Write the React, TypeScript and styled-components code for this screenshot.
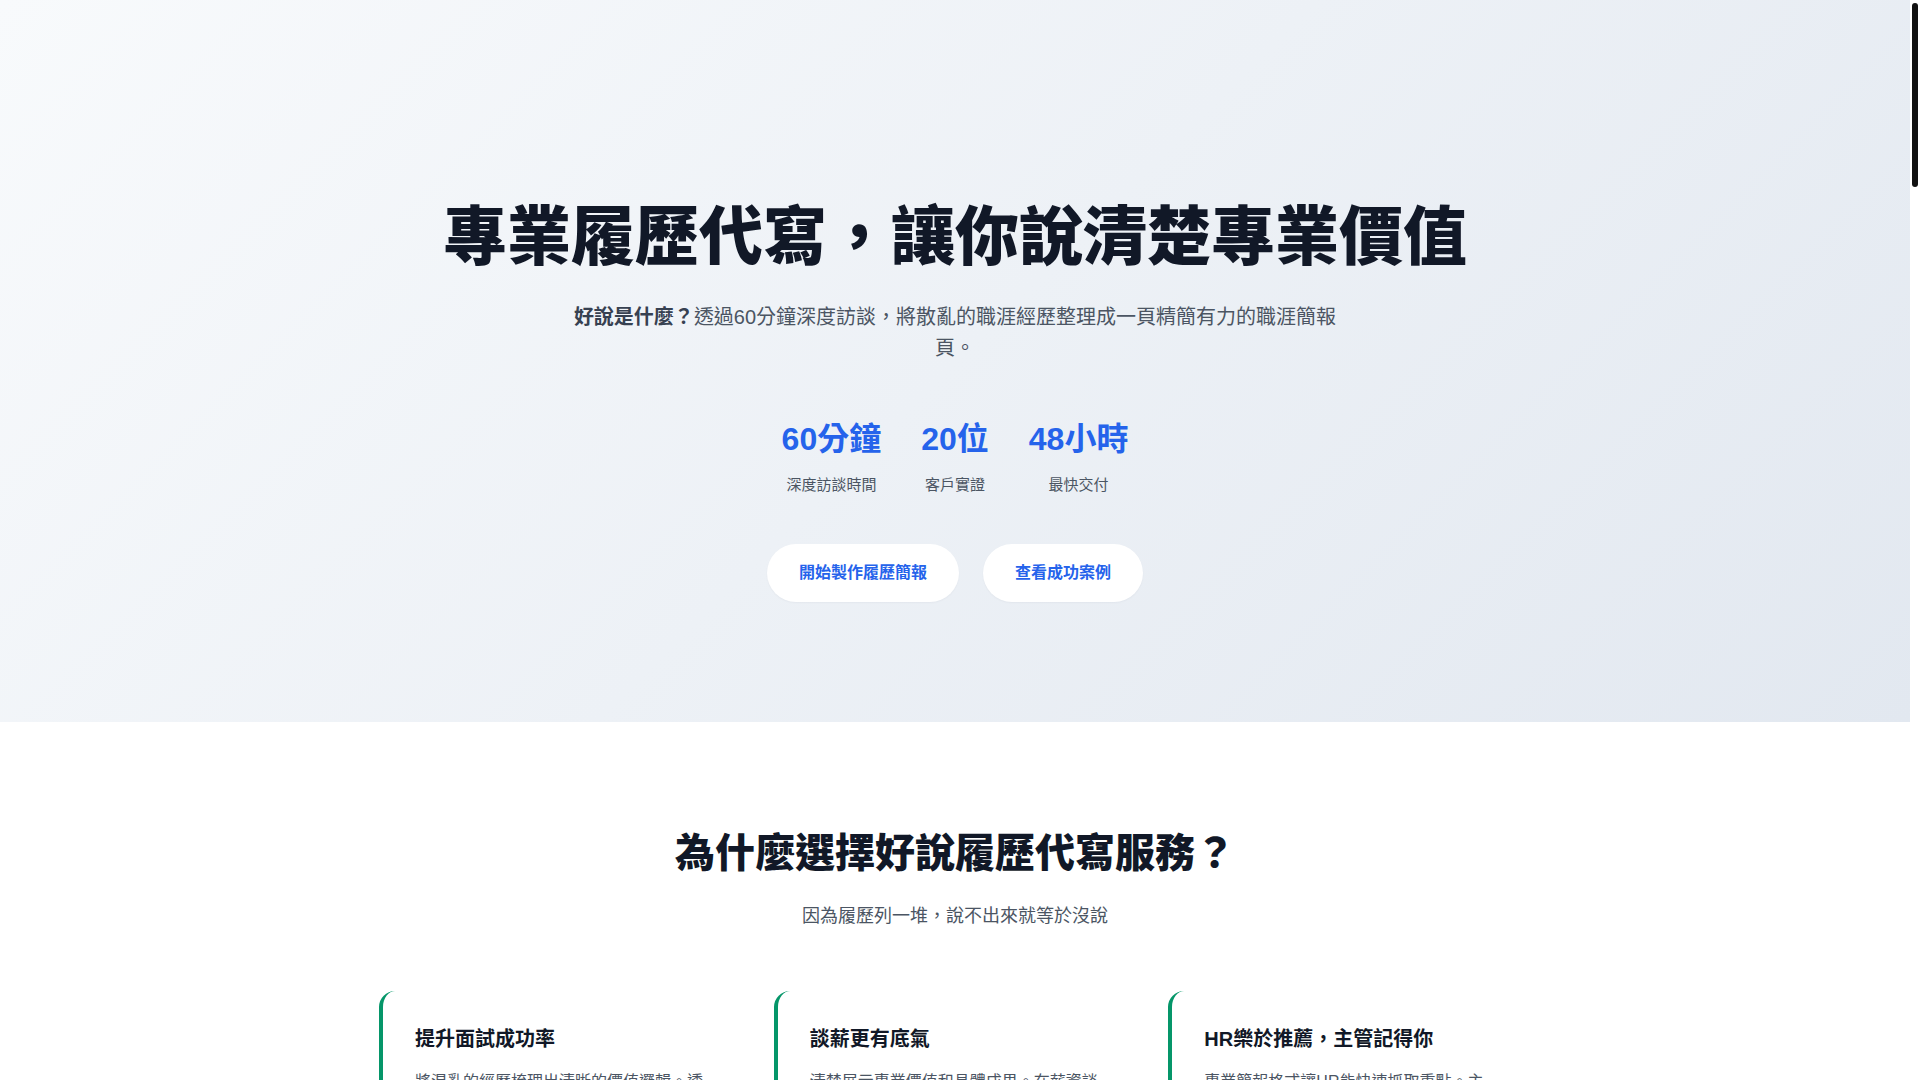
import React from "react";
import styled, { createGlobalStyle } from "styled-components";

const GlobalStyle = createGlobalStyle`
  html, body { margin: 0; padding: 0; }
  body {
    font-family: "Liberation Sans", "Noto Sans CJK TC", "Noto Sans", sans-serif;
    background: #ffffff;
    color: #111827;
    -webkit-font-smoothing: antialiased;
  }
  * { box-sizing: border-box; }
  ::-webkit-scrollbar { width: 0; height: 0; }
`;

const Page = styled.div`
  padding-right: 10px;
  background: #ffffff;
`;

/* drawing of the browser scrollbar seen in the screenshot, overlaying the right edge */
const ScrollRail = styled.div`
  position: fixed;
  top: 0;
  right: 0;
  width: 10px;
  height: 100vh;
  background: #ffffff;
  padding: 3px 2px;
  z-index: 10;
`;

const ScrollThumb = styled.div`
  width: 6px;
  height: 184px;
  border-radius: 3px;
  background: #111111;
`;

const Hero = styled.section`
  background: linear-gradient(135deg, #f8fafc 0%, #e2e8f0 100%);
  padding: 199px 24px 120px;
  text-align: center;
`;

const HeroTitle = styled.h1`
  margin: 0 0 26px;
  font-size: 64px;
  line-height: 1.2;
  font-weight: 900;
  color: #111827;
  letter-spacing: 0;
`;

const HeroLead = styled.p`
  max-width: 768px;
  margin: 0 auto;
  font-size: 20px;
  line-height: 1.55;
  color: #4b5563;

  strong {
    color: #374151;
    font-weight: 700;
  }
`;

const StatRow = styled.div`
  display: flex;
  justify-content: center;
  gap: 40px;
  margin-top: 55px;
`;

const Stat = styled.div`
  display: flex;
  flex-direction: column;
  align-items: center;
`;

const StatValue = styled.div`
  font-size: 32px;
  line-height: 1.25;
  font-weight: 700;
  color: #2563eb;
`;

const StatLabel = styled.div`
  margin-top: 15px;
  font-size: 15px;
  line-height: 1.5;
  color: #4b5563;
`;

const ButtonRow = styled.div`
  display: flex;
  justify-content: center;
  gap: 24px;
  margin-top: 48px;
`;

const PillButton = styled.button`
  padding: 16px 32px;
  border: none;
  border-radius: 9999px;
  background: #ffffff;
  color: #2563eb;
  font-family: inherit;
  font-size: 16px;
  line-height: 1.6;
  font-weight: 700;
  cursor: pointer;
  box-shadow: 0 1px 2px rgba(15, 23, 42, 0.04);
`;

const Section = styled.section<{ $bg?: string }>`
  background: ${(p) => p.$bg || "#ffffff"};
  padding: 107px 24px 96px;
  text-align: center;
`;

const SectionTitle = styled.h2`
  margin: 0 0 25px;
  font-size: 40px;
  line-height: 1.2;
  font-weight: 900;
  color: #111827;
`;

const SectionLead = styled.p`
  margin: 0;
  font-size: 18px;
  line-height: 1.6;
  color: #4b5563;
`;

const CardGrid = styled.div<{ $cols?: number }>`
  max-width: 1152px;
  margin: 60px auto 0;
  display: grid;
  grid-template-columns: repeat(${(p) => p.$cols || 3}, 1fr);
  gap: 32px;
  text-align: left;
`;

const Card = styled.div`
  background: #ffffff;
  border-left: 4px solid #059669;
  border-radius: 16px;
  padding: 34px 32px 32px;
`;

const CardTitle = styled.h3`
  margin: 0 0 15px;
  font-size: 20px;
  line-height: 1.4;
  font-weight: 700;
  color: #111827;
`;

const CardText = styled.p`
  margin: 0;
  font-size: 16px;
  line-height: 1.7;
  color: #4b5563;
`;

const StepCard = styled.div`
  background: #ffffff;
  border-radius: 16px;
  padding: 40px 32px;
  box-shadow: 0 4px 16px rgba(15, 23, 42, 0.06);
`;

const StepNumber = styled.div`
  width: 48px;
  height: 48px;
  border-radius: 50%;
  background: #2563eb;
  color: #ffffff;
  font-size: 20px;
  font-weight: 700;
  display: flex;
  align-items: center;
  justify-content: center;
  margin-bottom: 20px;
`;

const PriceCard = styled.div`
  background: #ffffff;
  border: 1px solid #e5e7eb;
  border-radius: 20px;
  padding: 48px 36px;
  min-height: 560px;
`;

const PriceValue = styled.div`
  margin: 16px 0 24px;
  font-size: 44px;
  font-weight: 800;
  color: #2563eb;
`;

const FeatureList = styled.ul`
  margin: 0;
  padding: 0 0 0 20px;
  font-size: 16px;
  line-height: 2.2;
  color: #4b5563;
`;

const Quote = styled.blockquote`
  margin: 0;
  background: #ffffff;
  border-radius: 16px;
  padding: 36px 32px;
  min-height: 320px;
  font-size: 16px;
  line-height: 1.8;
  color: #374151;
  box-shadow: 0 4px 16px rgba(15, 23, 42, 0.06);
`;

const QuoteAuthor = styled.div`
  margin-top: 20px;
  font-weight: 700;
  color: #111827;
`;

const FaqList = styled.div`
  max-width: 800px;
  margin: 62px auto 0;
  display: flex;
  flex-direction: column;
  gap: 16px;
  text-align: left;
`;

const FaqItem = styled.div`
  border: 1px solid #e5e7eb;
  border-radius: 12px;
  padding: 28px 32px;
`;

const FaqQ = styled.div`
  font-size: 18px;
  font-weight: 700;
  color: #111827;
  margin-bottom: 10px;
`;

const CtaBand = styled.section`
  background: linear-gradient(135deg, #f8fafc 0%, #e2e8f0 100%);
  padding: 120px 24px;
  text-align: center;
`;

const Footer = styled.footer`
  background: #0f172a;
  color: #94a3b8;
  padding: 80px 24px;
  text-align: center;
  font-size: 14px;
  line-height: 1.8;
`;

const reasons = [
  {
    title: "提升面試成功率",
    text: "將混亂的經歷梳理出清晰的價值邏輯。透過深度訪談挖掘你的核心優勢，讓面試官一眼看見你的專業與潛力。",
  },
  {
    title: "談薪更有底氣",
    text: "清楚展示專業價值和具體成果。在薪資談判時有憑有據，自信爭取你應得的待遇與職位。",
  },
  {
    title: "HR樂於推薦，主管記得你",
    text: "專業簡報格式讓HR能快速抓取重點。主管也更容易記住你的亮點與貢獻，增加被推薦的機會。",
  },
];

const steps = [
  { title: "預約諮詢", text: "填寫基本資料，選擇適合的訪談時段。" },
  { title: "深度訪談", text: "60分鐘一對一訪談，挖掘你的職涯亮點。" },
  { title: "撰寫簡報", text: "專業顧問整理成一頁精簡有力的職涯簡報。" },
  { title: "交付修改", text: "最快48小時交付，並提供修改服務。" },
];

const plans = [
  { name: "基礎方案", price: "NT$ 3,600", items: ["60分鐘深度訪談", "一頁職涯簡報", "一次修改"] },
  { name: "進階方案", price: "NT$ 5,800", items: ["60分鐘深度訪談", "一頁職涯簡報", "中英文版本", "兩次修改"] },
  { name: "完整方案", price: "NT$ 8,800", items: ["90分鐘深度訪談", "職涯簡報與履歷", "中英文版本", "面試模擬"] },
];

const quotes = [
  { text: "原本不知道怎麼介紹自己，訪談後整份簡報讓我在面試時更有自信。", who: "產品經理 / 王小姐" },
  { text: "簡報一頁就把我的經歷講清楚，主管面試時直接拿著簡報問問題。", who: "軟體工程師 / 陳先生" },
  { text: "談薪時有具體成果可以說，最後拿到比預期更好的條件。", who: "行銷專員 / 林小姐" },
];

const faqs = [
  { q: "訪談是線上還是實體？", a: "訪談以線上視訊進行，時間彈性，全台各地皆可預約。" },
  { q: "交付時間需要多久？", a: "訪談結束後最快48小時內交付初稿。" },
  { q: "可以修改嗎？", a: "依方案提供修改次數，確保簡報符合你的期待。" },
  { q: "適合哪些人？", a: "正在轉職、求職或準備升遷的專業工作者。" },
  { q: "如何付款？", a: "支援信用卡與銀行轉帳。" },
];

export default function App() {
  return (
    <Page>
      <GlobalStyle />
      <ScrollRail aria-hidden="true">
        <ScrollThumb />
      </ScrollRail>
      <Hero>
        <HeroTitle>專業履歷代寫，讓你說清楚專業價值</HeroTitle>
        <HeroLead>
          <strong>好說是什麼？</strong>透過60分鐘深度訪談，將散亂的職涯經歷整理成一頁精簡有力的職涯簡報頁。
        </HeroLead>
        <StatRow>
          <Stat>
            <StatValue>60分鐘</StatValue>
            <StatLabel>深度訪談時間</StatLabel>
          </Stat>
          <Stat>
            <StatValue>20位</StatValue>
            <StatLabel>客戶實證</StatLabel>
          </Stat>
          <Stat>
            <StatValue>48小時</StatValue>
            <StatLabel>最快交付</StatLabel>
          </Stat>
        </StatRow>
        <ButtonRow>
          <PillButton>開始製作履歷簡報</PillButton>
          <PillButton>查看成功案例</PillButton>
        </ButtonRow>
      </Hero>

      <Section>
        <SectionTitle>為什麼選擇好說履歷代寫服務？</SectionTitle>
        <SectionLead>因為履歷列一堆，說不出來就等於沒說</SectionLead>
        <CardGrid>
          {reasons.map((r) => (
            <Card key={r.title}>
              <CardTitle>{r.title}</CardTitle>
              <CardText>{r.text}</CardText>
            </Card>
          ))}
        </CardGrid>
      </Section>

      <Section $bg="#f8fafc">
        <SectionTitle>服務流程</SectionTitle>
        <SectionLead>四個步驟，讓你的專業被看見</SectionLead>
        <CardGrid $cols={4}>
          {steps.map((s, i) => (
            <StepCard key={s.title}>
              <StepNumber>{i + 1}</StepNumber>
              <CardTitle>{s.title}</CardTitle>
              <CardText>{s.text}</CardText>
            </StepCard>
          ))}
        </CardGrid>
      </Section>

      <Section>
        <SectionTitle>方案與價格</SectionTitle>
        <SectionLead>選擇最適合你的方案</SectionLead>
        <CardGrid>
          {plans.map((p) => (
            <PriceCard key={p.name}>
              <CardTitle>{p.name}</CardTitle>
              <PriceValue>{p.price}</PriceValue>
              <FeatureList>
                {p.items.map((it) => (
                  <li key={it}>{it}</li>
                ))}
              </FeatureList>
            </PriceCard>
          ))}
        </CardGrid>
      </Section>

      <Section $bg="#f8fafc">
        <SectionTitle>客戶見證</SectionTitle>
        <SectionLead>聽聽他們怎麼說</SectionLead>
        <CardGrid>
          {quotes.map((q) => (
            <Quote key={q.who}>
              {q.text}
              <QuoteAuthor>{q.who}</QuoteAuthor>
            </Quote>
          ))}
        </CardGrid>
      </Section>

      <Section>
        <SectionTitle>常見問題</SectionTitle>
        <SectionLead>還有疑問嗎？這裡有解答</SectionLead>
        <FaqList>
          {faqs.map((f) => (
            <FaqItem key={f.q}>
              <FaqQ>{f.q}</FaqQ>
              <CardText>{f.a}</CardText>
            </FaqItem>
          ))}
        </FaqList>
      </Section>

      <CtaBand>
        <SectionTitle>準備好說清楚你的專業價值了嗎？</SectionTitle>
        <ButtonRow>
          <PillButton>立即預約訪談</PillButton>
        </ButtonRow>
      </CtaBand>

      <Footer>© 2025 好說履歷代寫 · 讓你說清楚專業價值</Footer>
    </Page>
  );
}
